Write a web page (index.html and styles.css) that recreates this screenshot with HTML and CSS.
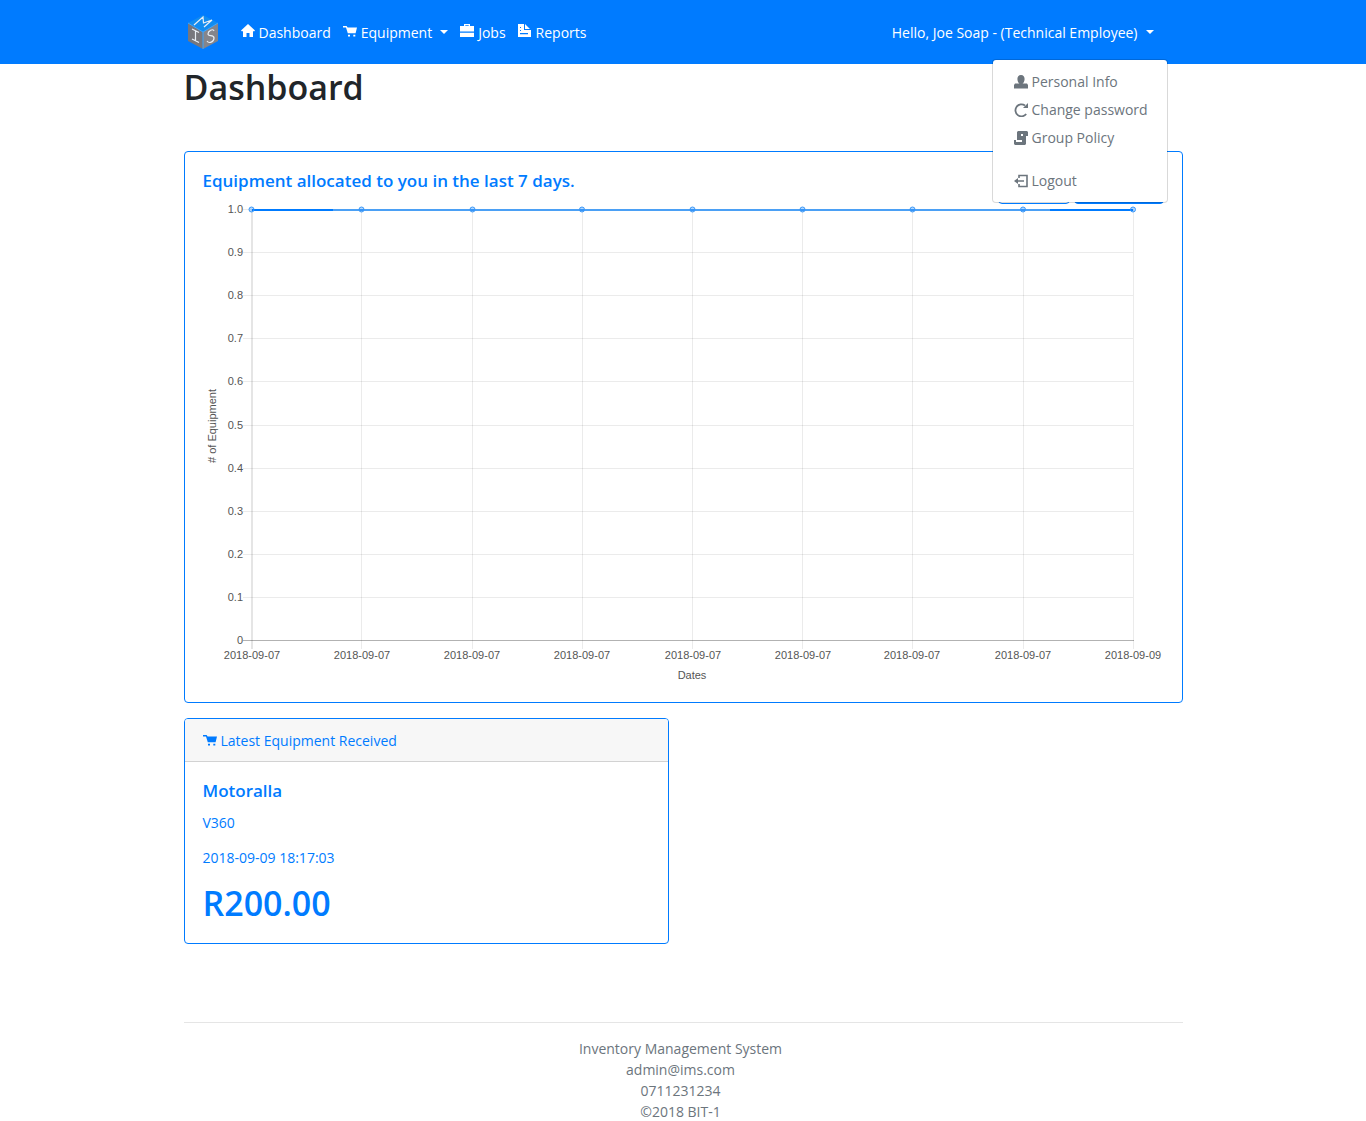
FILE: index.html
```html
<!DOCTYPE html>
<html lang="en">
<head>
<meta charset="utf-8">
<meta name="viewport" content="width=device-width, initial-scale=1">
<title>Dashboard</title>
<link rel="stylesheet" href="styles.css">
</head>
<body>
<svg class="sprite" aria-hidden="true">
  <symbol id="cart" viewBox="0 0 14 14"><path d="M0 2h3.600l1 1.500H14l-1.400 5.700H4.800L3 3.600H0zM5 10.800h2v1.700H5zM10.300 10.800h2v1.700h-2z"/></symbol>
</svg>
<header class="navbar">
  <nav class="container navbar-inner" aria-label="Main">
    <a class="brand" href="#" aria-label="IMS home">
      <svg width="32" height="34" viewBox="0 0 32 34">
        <path fill="#118cf0" d="M16 0 31 8 16 17 1 8z"/>
        <path fill="#77777d" d="M1 8l15 9v17L1 26z"/>
        <path fill="#85858b" d="M31 8l-15 9v17l15-8z"/>
        <path fill="none" stroke="#3ca5ff" d="M1 8l15 9 15-9M16 17v17"/>
        <path fill="none" stroke="#e8eef5" stroke-width="1.200" d="M7 10l9-8 .5 6 8.500-3-8 7M5 14l7 3.500M8.500 16v10M5 24l7 3.500M27 16c-1-3-6 0-6 3s6 0 6 4-5 6-7 3"/>
      </svg>
    </a>
    <ul class="nav">
      <li><a class="nav-link" href="#"><svg class="icon" viewBox="0 0 14 14"><path d="M7 0l7 6.500-1 1L12 7v6H8.500V9h-3v4H2V7L1 7.500l-1-1z"/></svg>Dashboard</a></li>
      <li><a class="nav-link" href="#"><svg class="icon"><use href="#cart"/></svg>Equipment<span class="caret"></span></a></li>
      <li><a class="nav-link" href="#"><svg class="icon" viewBox="0 0 14 14"><path d="M4 2V0h6v2h4v5.500H0V2h4zm1.300 0h3.400V1.200H5.300zM0 8.700h14V13H0z"/></svg>Jobs</a></li>
      <li><a class="nav-link" href="#"><svg class="icon" viewBox="0 0 14 14"><path fill-rule="evenodd" d="M0 0h6v6h7v7H0zM2 3v1h1V3zm0 3v1h1V6zm0 3v1.200h8V9zM7 0l5 5H7z"/></svg>Reports</a></li>
    </ul>
    <div class="user">
      <button class="user-toggle" type="button" aria-expanded="true" aria-controls="user-menu">Hello, Joe Soap - (Technical Employee)<span class="caret"></span></button>
      <ul class="menu" id="user-menu">
        <li><a href="#"><svg class="icon" viewBox="0 0 14 14"><path d="M7 0c2.500 0 3.600 1.800 3.600 4S9.500 8 8.500 8.500H13l1 1.500v3.500H0V10l1-1.500h4.500C4.500 8 3.400 6.200 3.400 4S4.500 0 7 0z"/></svg>Personal Info</a></li>
        <li><a href="#"><svg class="icon" viewBox="0 0 14 14"><path fill="none" stroke="currentColor" stroke-width="1.800" d="M12.200 11A6 6 0 1 1 11 2.500"/><path d="M14 0v5H9z"/></svg>Change password</a></li>
        <li><a href="#"><svg class="icon" viewBox="0 0 14 14"><path d="M4 0h9l1 1v4H9V3H7v2h5v8l-1 1H1l-1-1V9h2v2h6V9H3V1z"/></svg>Group Policy</a></li>
        <li class="menu-last"><a href="#"><svg class="icon" viewBox="0 0 14 14"><path fill="none" stroke="currentColor" stroke-width="1.600" d="M5 4V1.500h8v11H5V10M2 7h8"/><path d="M0 7l4-3v6z"/></svg>Logout</a></li>
      </ul>
    </div>
  </nav>
</header>
<main class="container">
  <h1>Dashboard</h1>
  <section class="card card-body">
    <div class="card-top">
      <h2>Equipment allocated to you in the last 7 days.</h2>
      <div class="actions">
        <button class="btn btn-outline" type="button" aria-label="Previous"></button>
        <button class="btn" type="button" aria-label="Next"></button>
      </div>
    </div>
    <svg class="chart" viewBox="0 0 961 480" role="img" aria-label="# of Equipment by date">
      <path class="grid" d="M40 48.500H930M40 91.500H930M40 134.500H930M40 177.500H930M40 221.500H930M40 264.500H930M40 307.500H930M40 350.500H930M40 393.500H930M158.500 5V445M269.500 5V445M379.500 5V445M489.500 5V445M599.500 5V445M709.500 5V445M820.500 5V445M930.500 5V445M40 5.500H48"/>
      <path class="axis-y" d="M49 5V445"/>
      <path class="axis-x" d="M40 436.500H931"/>
      <path class="series" d="M49 6H930"/>
      <path class="series-strong" d="M49 6H130M847 6H930"/>
      <g class="points">
        <circle cx="48.500" cy="5.500" r="2.500"/><circle cx="158.500" cy="5.500" r="2.500"/><circle cx="269.500" cy="5.500" r="2.500"/><circle cx="379" cy="5.500" r="2.500"/><circle cx="489.500" cy="5.500" r="2.500"/><circle cx="599.500" cy="5.500" r="2.500"/><circle cx="709.500" cy="5.500" r="2.500"/><circle cx="820" cy="5.500" r="2.500"/><circle cx="930" cy="5.500" r="2.500"/>
      </g>
      <g class="label-y">
        <text x="40" y="9">1.0</text><text x="40" y="52">0.9</text><text x="40" y="95">0.8</text><text x="40" y="138">0.7</text><text x="40" y="181">0.6</text><text x="40" y="225">0.5</text><text x="40" y="268">0.4</text><text x="40" y="311">0.3</text><text x="40" y="354">0.2</text><text x="40" y="397">0.1</text><text x="40" y="440">0</text>
      </g>
      <g class="label-x">
        <text x="49" y="455">2018-09-07</text><text x="159" y="455">2018-09-07</text><text x="269" y="455">2018-09-07</text><text x="379" y="455">2018-09-07</text><text x="490" y="455">2018-09-07</text><text x="600" y="455">2018-09-07</text><text x="709" y="455">2018-09-07</text><text x="820" y="455">2018-09-07</text><text x="930" y="455">2018-09-09</text>
        <text x="489" y="475">Dates</text>
        <text transform="translate(13 222) rotate(-90)">#&#160;of Equipment</text>
      </g>
    </svg>
  </section>
  <div class="columns">
    <section class="card">
      <div class="card-header"><svg class="icon"><use href="#cart"/></svg>Latest Equipment Received</div>
      <div class="card-body">
        <h2>Motoralla</h2>
        <p>V360</p>
        <p>2018-09-09 18:17:03</p>
        <p class="price">R200.00</p>
      </div>
    </section>
  </div>
  <footer>
    <p>Inventory Management System</p>
    <p>admin@ims.com</p>
    <p>0711231234</p>
    <p>©2018 BIT-1</p>
  </footer>
</main>
</body>
</html>
```
FILE: styles.css
```css
* { box-sizing: border-box; }
body {
  margin: 0;
  background: #fff;
  color: #212529;
  font: 14px/21px "Open Sans", "Noto Sans", sans-serif;
}
h1, h2, p, ul { margin: 0; padding: 0; }
ul { list-style: none; }
a { color: inherit; text-decoration: none; }
.sprite { display: none; }
.container { width: 100%; max-width: 999px; margin: 0 auto; }
.icon { width: 14px; height: 14px; flex: none; fill: currentColor; }

.navbar { background: #007bff; color: #fff; }
.navbar-inner { display: flex; align-items: center; height: 64px; padding: 0 15px 0 3px; }
.brand { display: flex; margin-right: 22px; }
.nav { display: flex; gap: 12px; }
.nav-link, .menu a { display: flex; gap: 4px; }
.nav-link .icon { margin-top: 2px; }
.caret {
  align-self: center;
  border: 4px solid transparent;
  border-top-color: currentColor;
  border-bottom: 0;
  margin-left: 4px;
}
.user { position: relative; margin-left: auto; }
.user-toggle {
  display: flex;
  gap: 4px;
  padding: 0 14px 0 0;
  border: 0;
  background: none;
  color: inherit;
  font: inherit;
}
.menu {
  position: absolute;
  z-index: 1;
  top: 37px;
  right: 0;
  width: 176px;
  padding: 8px 0 7px;
  border: 1px solid rgba(0, 0, 0, .15);
  border-radius: 4px;
  background: #fff;
  background-clip: padding-box;
  color: #6c757d;
}
.menu a { align-items: center; height: 28px; padding: 0 21px; white-space: nowrap; }
.menu-last { margin-top: 15px; }

h1 { padding-top: 2px; margin-bottom: 43px; font-size: 34px; font-weight: 600; line-height: 42px; }
h2 { font-size: 17px; font-weight: 600; line-height: 22px; }
.card { border: 1px solid #007bff; border-radius: 4px; color: #007bff; overflow: hidden; }
.card-body { padding: 18px; }
.card-top { display: flex; justify-content: space-between; }
.actions { display: flex; gap: 4px; }
.btn { width: 90px; height: 34px; border: 1px solid #007bff; border-radius: 4px; background: #007bff; }
.btn-outline { width: 72px; background: #fff; }
.chart { display: block; width: 100%; height: auto; font: 11px "Liberation Sans", sans-serif; }
.chart path { fill: none; }
.chart text { fill: #555; }
.chart .grid { stroke: rgba(0, 0, 0, .08); }
.chart .axis-y { stroke: rgba(0, 0, 0, .1); stroke-width: 2px; }
.chart .axis-x { stroke: rgba(0, 0, 0, .3); }
.chart .series { stroke: #4ba0f5; stroke-width: 2px; }
.chart .series-strong { stroke: #007bff; stroke-width: 2px; }
.points { fill: rgba(0, 123, 255, .3); stroke: #3b98f8; }
.label-y { text-anchor: end; }
.label-x { text-anchor: middle; }

.columns { display: grid; grid-template-columns: 1fr 1fr; gap: 28px; margin-top: 15px; }
.card-header {
  display: flex;
  align-items: center;
  gap: 4px;
  height: 43px;
  padding: 0 18px;
  border-bottom: 1px solid rgba(0, 0, 0, .15);
  background: #f7f7f7;
}
.columns h2 { margin-bottom: 10px; }
.columns p { margin-bottom: 14px; }
.columns .price { margin: 0; font-size: 34px; font-weight: 600; line-height: 43px; }

footer { margin-top: 78px; padding: 15px 5px 0 0; border-top: 1px solid rgba(0, 0, 0, .1); color: #6c757d; text-align: center; }
```
